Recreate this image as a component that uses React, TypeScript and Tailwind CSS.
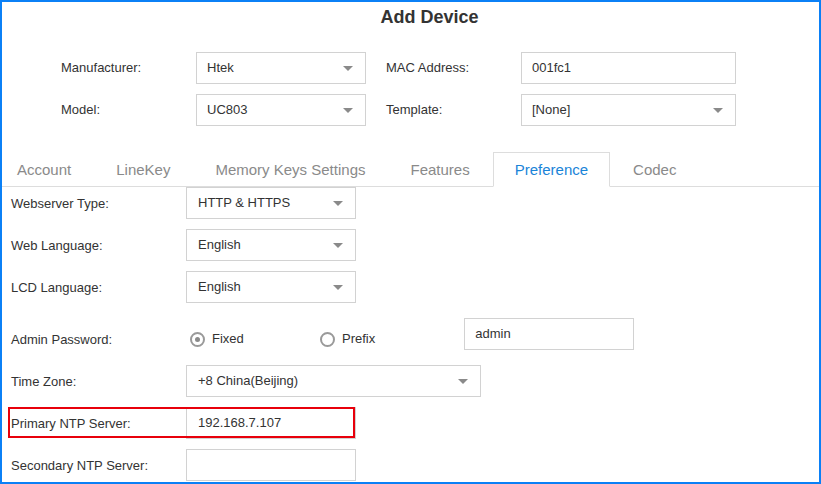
import React from "react";

const tabs = ["Account", "LineKey", "Memory Keys Settings", "Features", "Preference", "Codec"];

function Caret() {
    return <span className="w-0 h-0 border-l-[5px] border-r-[5px] border-t-[5px] border-l-transparent border-r-transparent border-t-[#8a8a8a]" />;
}

function Select({ value, width, pad = "pl-[10px]" }: { value: string; width: string; pad?: string }) {
    return (
        <div className={`${width} h-[32px] border border-[#d2d2d2] bg-white flex items-center justify-between ${pad} pr-[12px] shrink-0`}>
            <span>{value}</span>
            <Caret />
        </div>
    );
}

function Input({ value = "", width, pad = "pl-[10px]" }: { value?: string; width: string; pad?: string }) {
    return (
        <div className={`${width} h-[32px] border border-[#d2d2d2] bg-white flex items-center ${pad} shrink-0`}>
            {value}
        </div>
    );
}

function Radio({ checked, label }: { checked?: boolean; label: string }) {
    return (
        <div className="flex items-center">
            <span className="w-[15px] h-[15px] rounded-full border-2 border-[#9a9a9a] flex items-center justify-center">
                {checked && <span className="w-[5px] h-[5px] rounded-full bg-[#8a8a8a]" />}
            </span>
            <span className="ml-[7px]">{label}</span>
        </div>
    );
}

function Row({ label, children }: { label: string; children: React.ReactNode }) {
    return (
        <div className="flex items-center h-[32px] mb-[10px]">
            <div className="w-[175px] shrink-0 pt-px">{label}</div>
            {children}
        </div>
    );
}

export default function App() {
    return (
        <div className="w-[821px] h-[484px] border-2 border-[#0b80f6] bg-white overflow-hidden text-[13px] text-[#333] font-['Liberation_Sans',Arial,sans-serif]">
            {/* Title */}
            <div className="pt-[5px] pl-[38px] text-center text-[18px] leading-[20px] font-bold">Add Device</div>

            {/* Device fields */}
            <div className="mt-[25px] pl-[59px] flex flex-col gap-[10px]">
                <div className="flex items-center">
                    <div className="w-[135px] shrink-0">Manufacturer:</div>
                    <Select value="Htek" width="w-[170px]" />
                    <div className="w-[135px] ml-[20px] shrink-0">MAC Address:</div>
                    <Input value="001fc1" width="w-[215px]" />
                </div>
                <div className="flex items-center">
                    <div className="w-[135px] shrink-0">Model:</div>
                    <Select value="UC803" width="w-[170px]" />
                    <div className="w-[135px] ml-[20px] shrink-0">Template:</div>
                    <Select value="[None]" width="w-[215px]" />
                </div>
            </div>

            {/* Tabs */}
            <div className="mt-[26px] flex border-b border-[#dddddd] text-[15px] text-[#8a8a8a]">
                {tabs.map((t, i) => {
                    const active = t === "Preference";
                    return (
                        <div
                            key={t}
                            className={`h-[35px] -mb-px leading-[33px] border mr-[1px] ${i === 0 ? "pl-[14px] pr-[21px]" : "px-[21px]"} ${active ? "border-[#dddddd] border-b-white bg-white text-[#1a84d8]" : "border-transparent"}`}
                        >
                            {t}
                        </div>
                    );
                })}
            </div>

            {/* Preference form */}
            <div className="pl-[9px]">
                <Row label="Webserver Type:">
                    <Select value="HTTP & HTTPS" width="w-[170px]" pad="pl-[11px]" />
                </Row>
                <Row label="Web Language:">
                    <Select value="English" width="w-[170px]" pad="pl-[11px]" />
                </Row>
                <Row label="LCD Language:">
                    <Select value="English" width="w-[170px]" pad="pl-[11px]" />
                </Row>

                <div className="flex items-start mt-[15px] mb-[10px]">
                    <div className="w-[175px] h-[32px] mt-[5px] pt-px flex items-center shrink-0">Admin Password:</div>
                    <div className="h-[32px] mt-[5px] flex items-center pl-[4px]">
                        <div className="w-[130px]"><Radio checked label="Fixed" /></div>
                        <Radio label="Prefix" />
                    </div>
                    <div className="ml-[89px]">
                        <Input value="admin" width="w-[170px]" />
                    </div>
                </div>

                <Row label="Time Zone:">
                    <Select value="+8 China(Beijing)" width="w-[295px]" pad="pl-[11px]" />
                </Row>

                <div className="relative">
                    <Row label="Primary NTP Server:">
                        <Input value="192.168.7.107" width="w-[170px]" pad="pl-[11px]" />
                    </Row>
                    {/* highlight */}
                    <div className="absolute left-[-3px] top-0 w-[347px] h-[31px] border-2 border-[#e8000b]" />
                </div>

                <Row label="Secondary NTP Server:">
                    <Input width="w-[170px]" />
                </Row>
            </div>
        </div>
    );
}
